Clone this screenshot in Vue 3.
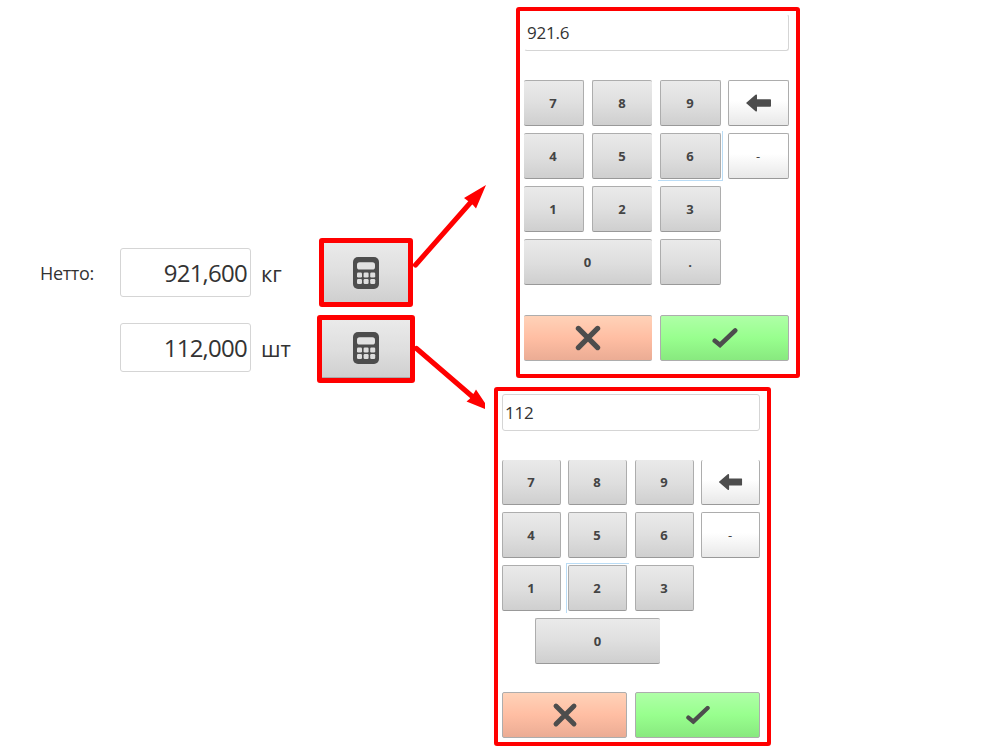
<script setup>
const fields = [
  { label: 'Нетто:', value: '921,600', unit: 'кг' },
  { label: '', value: '112,000', unit: 'шт' },
]
const rows = ['7', '8', '9', 'back', '4', '5', '6', '-', '1', '2', '3']
const pads = [
  { name: 'weight', value: '921.6', focused: '6', keys: [...rows, 'blank', '0', '.'] },
  { name: 'pieces', value: '112', focused: '2', keys: [...rows, 'blank', '0'] },
]
const cells = [0, 1, 2, 3, 4, 5]
</script>

<template>
  <main class="stage">
    <section class="form">
      <div v-for="f in fields" :key="f.unit" class="field">
        <span class="label">{{ f.label }}</span>
        <span class="amount">{{ f.value }}</span>
        <span class="unit">{{ f.unit }}</span>
      </div>
    </section>

    <section class="openers">
      <button v-for="f in fields" :key="f.unit" class="opener">
        <svg width="26" height="32" viewBox="0 0 26 32">
          <rect width="26" height="32" rx="5" fill="#4d4d4d" />
          <rect x="4" y="5.3" width="18" height="7.2" rx="2.6" fill="#e2e2e2" />
          <rect
            v-for="c in cells" :key="c"
            :x="4 + (c % 3) * 6.6" :y="c < 3 ? 15.5 : 22"
            width="5" height="5" rx="1.2" fill="#dedede"
          />
        </svg>
      </button>
    </section>

    <section class="pads">
      <div v-for="p in pads" :key="p.name" class="pad" :class="p.name">
        <div class="display">{{ p.value }}</div>
        <div class="keys">
          <template v-for="k in p.keys" :key="k">
            <i v-if="k === 'blank'"></i>
            <button
              v-else class="key"
              :class="{
                light: k === 'back' || k === '-',
                zero: k === '0',
                focused: k === p.focused,
                first: '7410'.includes(k),
                second: '852'.includes(k),
                top: ['7', '8', '9', 'back'].includes(k),
              }"
            >
              <svg v-if="k === 'back'" class="back" width="25" height="18" viewBox="0 0 25 18">
                <path d="M0 9 9.5 .8Q11 0 11 1.3V5.3H24.2Q25 5.3 25 6.1V11.9Q25 12.7 24.2 12.7H11V16.7Q11 18 9.5 17.2Z" fill="#4d4d4d" />
              </svg>
              <span v-else class="glyph">{{ k }}</span>
            </button>
          </template>
        </div>
        <div class="actions">
          <button class="key cancel">
            <svg width="26" height="26" viewBox="0 0 26 26">
              <path d="M3.4 3.4 22.6 22.6M22.6 3.4 3.4 22.6" stroke="#4d4d4d" stroke-width="5.2" stroke-linecap="round" />
            </svg>
          </button>
          <button class="key accept">
            <svg width="26" height="20" viewBox="0 0 26 20">
              <path d="M2.8 12.8 8 17 23.2 2.5" fill="none" stroke="#4d4d4d" stroke-width="4.6" stroke-linecap="round" stroke-linejoin="miter" />
            </svg>
          </button>
        </div>
      </div>
    </section>

    <svg class="arrows" width="982" height="751" viewBox="0 0 982 751">
      <g fill="#f00" stroke="#f00">
        <path d="M415.5 265 471 202" stroke-width="5" stroke-linecap="round" />
        <path d="M486 185 464 198 468 201 473 205 476 208.500Z" stroke="none" />
        <path d="M416.5 348.500 474 398" stroke-width="5" stroke-linecap="round" />
        <path d="M485 409 466.500 401.500 469.500 399 474 393 476 389.500 485 403Z" stroke="none" />
      </g>
    </svg>
  </main>
</template>

<style>
body {
  background: #fff;
}
</style>

<style scoped>
.stage {
  position: relative;
  display: flex;
  align-items: flex-start;
  width: 982px;
  height: 751px;
  overflow: hidden;
  background: #fff;
  color: #333;
  font-family: "Open Sans", "Noto Sans", sans-serif;
}
.form {
  display: flex;
  flex-direction: column;
  gap: 26px;
  width: 317px;
  padding: 248px 0 0 40px;
  box-sizing: border-box;
}
.field {
  display: grid;
  grid-template-columns: 80px 131px 1fr;
  grid-template-rows: 49px;
  align-items: center;
}
.label {
  font-size: 18px;
  letter-spacing: -0.35px;
}
.amount {
  box-sizing: border-box;
  height: 49px;
  padding-right: 3px;
  border: 1px solid #d5d5d5;
  border-radius: 3px;
  font-size: 24px;
  line-height: 48px;
  letter-spacing: -0.75px;
  text-align: right;
}
.unit {
  padding: 1px 0 0 10px;
  font-size: 22px;
  line-height: 48px;
}
.openers {
  display: flex;
  flex-direction: column;
  align-items: center;
  gap: 8px;
  width: 98px;
  padding-top: 238px;
}
button {
  margin: 0;
  padding: 0;
  font: inherit;
}
.opener {
  display: flex;
  justify-content: center;
  box-sizing: border-box;
  width: 94px;
  height: 69px;
  padding-top: 14px;
  border: 5px solid #f00;
  border-radius: 3px;
  background: linear-gradient(#eaeaea, #dfdfdf 50%, #cfcfcf);
}
.opener + .opener {
  width: 98px;
  height: 68px;
  padding-top: 12px;
  box-shadow: inset 0 -1px #aaa;
}
.opener svg {
  display: block;
}
.pads {
  display: flex;
  flex-direction: column;
  gap: 9px;
  padding: 7px 0 0 79px;
}
.pad {
  box-sizing: border-box;
  border: 4px solid #f00;
  border-radius: 3px;
}
.weight {
  width: 284px;
  height: 371px;
  margin-left: 22px;
  padding: 3px 7px 0 4px;
}
.pieces {
  width: 277px;
  height: 359px;
  padding: 3px 7px 0 4px;
}
.display {
  box-sizing: border-box;
  height: 37px;
  padding-left: 2px;
  border: 1px solid #d5d5d5;
  border-radius: 3px;
  font-size: 17px;
  line-height: 36px;
  letter-spacing: -0.2px;
}
.weight .display {
  border-top-color: #fff;
  border-left-color: #fff;
}
.keys {
  display: grid;
  grid-template-columns: repeat(4, 61px);
  grid-auto-rows: 46px;
  gap: 7px;
  margin-top: 29px;
}
.pieces .keys {
  grid-template-columns: 59px 60px 59px 59px;
  grid-template-rows: 45px;
}
.key {
  display: flex;
  align-items: center;
  justify-content: center;
  box-sizing: border-box;
  border: 1px solid #adadad;
  border-bottom-color: #999;
  border-radius: 2px;
  background: linear-gradient(#eaeaea, #dfdfdf 50%, #cfcfcf);
  color: #444;
  font-size: 13px;
  font-weight: 700;
}
.glyph {
  margin-right: 1px;
}
.light {
  background: linear-gradient(#fff 45%, #e8e8e8);
  font-weight: 400;
}
.weight .first,
.weight .second {
  margin-right: 1px;
}
.weight .first,
.weight .cancel {
  border-left: 0;
}
.weight .second,
.weight .zero,
.weight .cancel {
  border-right: 0;
}
.weight .zero {
  grid-column: 1 / 3;
}
.pieces .second {
  margin-right: 1px;
}
.pieces .top {
  border-top: 0;
}
.pieces .zero {
  grid-column: 1 / 4;
  width: 125px;
  margin-left: 33px;
  border-right: 0;
}
.focused {
  position: relative;
}
.focused::after {
  content: "";
  position: absolute;
  inset: -3px;
  pointer-events: none;
}
.weight .focused::after {
  border-right: 1px solid #badcf5;
  border-bottom: 1px solid #badcf5;
}
.pieces .focused::after {
  border-top: 1px solid #badcf5;
  border-left: 1px solid #badcf5;
}
.actions {
  display: grid;
  grid-template-columns: 128px 129px;
  grid-auto-rows: 46px;
  gap: 8px;
  margin-top: 30px;
}
.pieces .actions {
  grid-template-columns: 125px 125px;
  margin-top: 28px;
}
.cancel,
.accept {
  border-bottom-color: #adadad;
}
.cancel {
  background: linear-gradient(#ffd2b8, #ffbea3 50%, #ebac94);
}
.accept {
  background: linear-gradient(#afffa7, #98ff8e 50%, #88e97f);
}
.weight .actions svg {
  margin-bottom: 1px;
}
.pieces .actions svg,
.pieces .back {
  transform: scale(0.94);
}
.arrows {
  position: absolute;
  inset: 0;
  pointer-events: none;
}
</style>
